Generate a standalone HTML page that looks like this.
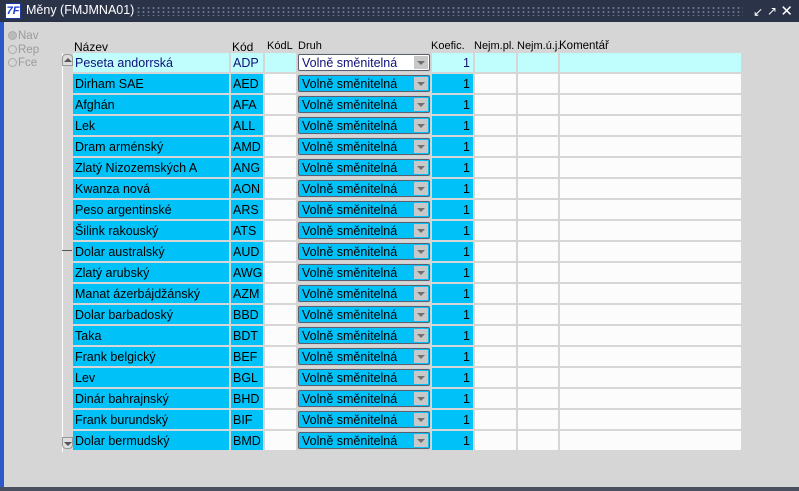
<!DOCTYPE html>
<html><head><meta charset="utf-8"><style>
*{margin:0;padding:0;box-sizing:border-box}
body{width:799px;height:491px;overflow:hidden;background:#d6d6d6;font-family:"Liberation Sans",sans-serif;font-size:12px;position:relative}
.title{position:absolute;left:0;top:0;width:799px;height:22px;background:#2b3349;color:#fff;font-size:12.5px}
.title .ic{position:absolute;left:5px;top:3px;width:16px;height:16px;background:#fff;border:1px solid #1a3aa0;color:#1a3ad0;font-weight:bold;font-style:italic;font-size:11px;line-height:14px;text-align:center}
.title .t{position:absolute;left:26px;top:3px}
.title .dots{position:absolute;left:136px;right:56px;top:6px;height:10px;background-image:radial-gradient(#6a7590 1px,transparent 1.3px);background-size:5px 4px}
.lb{position:absolute;left:0;top:22px;width:4px;height:469px;background:#2a5ac8}
.bb{position:absolute;left:0;top:487px;width:799px;height:4px;background:#4a5060}
.radio{position:absolute;left:8px;color:#9a9a9a;font-size:11.5px}
.radio i{display:inline-block;width:9px;height:9px;border-radius:50%;border:1px solid #aaa;margin-right:1px;vertical-align:-1px}
.hdr{position:absolute;top:40px;font-size:11px;color:#000}
.row{position:absolute;left:73px;height:19px;display:flex;font-size:12.5px}
.row>div{height:19px;line-height:20px;padding-left:2px;margin-right:2px;background:#00c2f8;color:#000;white-space:nowrap;overflow:hidden}
.row>.w{background:#fcfcfc}
.row>.d{background:#d0d0d0;margin-right:1px;padding:1px 0 0 1px;line-height:15px}
.sel{width:132px;height:17px;border:1px solid #5a6070;border-radius:2px;background:#00c2f8;position:relative;line-height:16px;padding-left:3px;font-size:12.5px}
.sel span{position:absolute;right:1px;top:1px;width:14px;height:13px;background:#c8c8c8}
.sel span:after{content:"";position:absolute;left:3px;top:5px;border:4px solid transparent;border-top:4px solid #707070;border-bottom:0}
.row>.n{text-align:right;padding-right:3px}
.r0>div{background:#c0fefe;color:#10107a}
.r0>.d{background:#d0d0d0}
.r0 .sel{background:#fff;color:#10107a}
.sb{position:absolute;left:62px;top:53px;width:10px;height:399px;border-left:1px solid #fff}
</style></head><body>
<div class="title"><div class="ic">7F</div><div class="t">Měny (FMJMNA01)</div><div class="dots"></div>
<div style="position:absolute;right:36px;top:5px;color:#fff;font-size:12px">↙</div>
<div style="position:absolute;right:22px;top:4px;color:#fff;font-size:12px">↗</div>
<div style="position:absolute;right:6px;top:2px;color:#fff;font-size:15px">✕</div></div>
<div class="lb"></div><div class="bb"></div>
<div class="radio" style="top:30px"><i style="background:#bbb"></i>Nav</div>
<div class="radio" style="top:44px"><i></i>Rep</div>
<div class="radio" style="top:57px"><i></i>Fce</div>
<div class="hdr" style="left:74px;font-size:12px">Název</div>
<div class="hdr" style="left:232px;font-size:12px">Kód</div>
<div class="hdr" style="left:267px">KódL</div>
<div class="hdr" style="left:298px">Druh</div>
<div class="hdr" style="left:431px">Koefic.</div>
<div class="hdr" style="left:474px">Nejm.pl.</div>
<div class="hdr" style="left:517px">Nejm.ú.j.</div>
<div class="hdr" style="left:559px;font-size:11.5px">Komentář</div>
<div class="sb"></div>
<div style="position:absolute;left:62px;top:54px;width:11px;height:12px;border:1px solid #999;border-radius:4px 4px 0 0;background:#ddd"><div style="position:absolute;left:1px;top:3px;border:4px solid transparent;border-bottom:4px solid #555;border-top:0"></div></div>
<div style="position:absolute;left:62px;top:437px;width:11px;height:12px;border:1px solid #999;border-radius:0 0 4px 4px;background:#ddd"><div style="position:absolute;left:1px;top:4px;border:4px solid transparent;border-top:4px solid #555;border-bottom:0"></div></div>
<div style="position:absolute;left:62px;top:250px;width:10px;height:1px;background:#555"></div>

<div class="row r0" style="top:53px"><div style="width:156px">Peseta andorrská</div><div style="width:32px">ADP</div><div style="width:31px;margin-right:1px"></div><div class="d" style="width:134px"><div class="sel">Volně směnitelná<span></span></div></div><div class="n" style="width:41px">1</div><div style="width:41px"></div><div style="width:40px"></div><div style="width:181px"></div></div>
<div class="row" style="top:74px"><div style="width:156px">Dirham SAE</div><div style="width:32px">AED</div><div class="w" style="width:31px;margin-right:1px"></div><div class="d" style="width:134px"><div class="sel">Volně směnitelná<span></span></div></div><div class="n" style="width:41px">1</div><div class="w" style="width:41px"></div><div class="w" style="width:40px"></div><div class="w" style="width:181px"></div></div>
<div class="row" style="top:95px"><div style="width:156px">Afghán</div><div style="width:32px">AFA</div><div class="w" style="width:31px;margin-right:1px"></div><div class="d" style="width:134px"><div class="sel">Volně směnitelná<span></span></div></div><div class="n" style="width:41px">1</div><div class="w" style="width:41px"></div><div class="w" style="width:40px"></div><div class="w" style="width:181px"></div></div>
<div class="row" style="top:116px"><div style="width:156px">Lek</div><div style="width:32px">ALL</div><div class="w" style="width:31px;margin-right:1px"></div><div class="d" style="width:134px"><div class="sel">Volně směnitelná<span></span></div></div><div class="n" style="width:41px">1</div><div class="w" style="width:41px"></div><div class="w" style="width:40px"></div><div class="w" style="width:181px"></div></div>
<div class="row" style="top:137px"><div style="width:156px">Dram arménský</div><div style="width:32px">AMD</div><div class="w" style="width:31px;margin-right:1px"></div><div class="d" style="width:134px"><div class="sel">Volně směnitelná<span></span></div></div><div class="n" style="width:41px">1</div><div class="w" style="width:41px"></div><div class="w" style="width:40px"></div><div class="w" style="width:181px"></div></div>
<div class="row" style="top:158px"><div style="width:156px">Zlatý Nizozemských A</div><div style="width:32px">ANG</div><div class="w" style="width:31px;margin-right:1px"></div><div class="d" style="width:134px"><div class="sel">Volně směnitelná<span></span></div></div><div class="n" style="width:41px">1</div><div class="w" style="width:41px"></div><div class="w" style="width:40px"></div><div class="w" style="width:181px"></div></div>
<div class="row" style="top:179px"><div style="width:156px">Kwanza nová</div><div style="width:32px">AON</div><div class="w" style="width:31px;margin-right:1px"></div><div class="d" style="width:134px"><div class="sel">Volně směnitelná<span></span></div></div><div class="n" style="width:41px">1</div><div class="w" style="width:41px"></div><div class="w" style="width:40px"></div><div class="w" style="width:181px"></div></div>
<div class="row" style="top:200px"><div style="width:156px">Peso argentinské</div><div style="width:32px">ARS</div><div class="w" style="width:31px;margin-right:1px"></div><div class="d" style="width:134px"><div class="sel">Volně směnitelná<span></span></div></div><div class="n" style="width:41px">1</div><div class="w" style="width:41px"></div><div class="w" style="width:40px"></div><div class="w" style="width:181px"></div></div>
<div class="row" style="top:221px"><div style="width:156px">Šilink rakouský</div><div style="width:32px">ATS</div><div class="w" style="width:31px;margin-right:1px"></div><div class="d" style="width:134px"><div class="sel">Volně směnitelná<span></span></div></div><div class="n" style="width:41px">1</div><div class="w" style="width:41px"></div><div class="w" style="width:40px"></div><div class="w" style="width:181px"></div></div>
<div class="row" style="top:242px"><div style="width:156px">Dolar australský</div><div style="width:32px">AUD</div><div class="w" style="width:31px;margin-right:1px"></div><div class="d" style="width:134px"><div class="sel">Volně směnitelná<span></span></div></div><div class="n" style="width:41px">1</div><div class="w" style="width:41px"></div><div class="w" style="width:40px"></div><div class="w" style="width:181px"></div></div>
<div class="row" style="top:263px"><div style="width:156px">Zlatý arubský</div><div style="width:32px">AWG</div><div class="w" style="width:31px;margin-right:1px"></div><div class="d" style="width:134px"><div class="sel">Volně směnitelná<span></span></div></div><div class="n" style="width:41px">1</div><div class="w" style="width:41px"></div><div class="w" style="width:40px"></div><div class="w" style="width:181px"></div></div>
<div class="row" style="top:284px"><div style="width:156px">Manat ázerbájdžánský</div><div style="width:32px">AZM</div><div class="w" style="width:31px;margin-right:1px"></div><div class="d" style="width:134px"><div class="sel">Volně směnitelná<span></span></div></div><div class="n" style="width:41px">1</div><div class="w" style="width:41px"></div><div class="w" style="width:40px"></div><div class="w" style="width:181px"></div></div>
<div class="row" style="top:305px"><div style="width:156px">Dolar barbadoský</div><div style="width:32px">BBD</div><div class="w" style="width:31px;margin-right:1px"></div><div class="d" style="width:134px"><div class="sel">Volně směnitelná<span></span></div></div><div class="n" style="width:41px">1</div><div class="w" style="width:41px"></div><div class="w" style="width:40px"></div><div class="w" style="width:181px"></div></div>
<div class="row" style="top:326px"><div style="width:156px">Taka</div><div style="width:32px">BDT</div><div class="w" style="width:31px;margin-right:1px"></div><div class="d" style="width:134px"><div class="sel">Volně směnitelná<span></span></div></div><div class="n" style="width:41px">1</div><div class="w" style="width:41px"></div><div class="w" style="width:40px"></div><div class="w" style="width:181px"></div></div>
<div class="row" style="top:347px"><div style="width:156px">Frank belgický</div><div style="width:32px">BEF</div><div class="w" style="width:31px;margin-right:1px"></div><div class="d" style="width:134px"><div class="sel">Volně směnitelná<span></span></div></div><div class="n" style="width:41px">1</div><div class="w" style="width:41px"></div><div class="w" style="width:40px"></div><div class="w" style="width:181px"></div></div>
<div class="row" style="top:368px"><div style="width:156px">Lev</div><div style="width:32px">BGL</div><div class="w" style="width:31px;margin-right:1px"></div><div class="d" style="width:134px"><div class="sel">Volně směnitelná<span></span></div></div><div class="n" style="width:41px">1</div><div class="w" style="width:41px"></div><div class="w" style="width:40px"></div><div class="w" style="width:181px"></div></div>
<div class="row" style="top:389px"><div style="width:156px">Dinár bahrajnský</div><div style="width:32px">BHD</div><div class="w" style="width:31px;margin-right:1px"></div><div class="d" style="width:134px"><div class="sel">Volně směnitelná<span></span></div></div><div class="n" style="width:41px">1</div><div class="w" style="width:41px"></div><div class="w" style="width:40px"></div><div class="w" style="width:181px"></div></div>
<div class="row" style="top:410px"><div style="width:156px">Frank burundský</div><div style="width:32px">BIF</div><div class="w" style="width:31px;margin-right:1px"></div><div class="d" style="width:134px"><div class="sel">Volně směnitelná<span></span></div></div><div class="n" style="width:41px">1</div><div class="w" style="width:41px"></div><div class="w" style="width:40px"></div><div class="w" style="width:181px"></div></div>
<div class="row" style="top:431px"><div style="width:156px">Dolar bermudský</div><div style="width:32px">BMD</div><div class="w" style="width:31px;margin-right:1px"></div><div class="d" style="width:134px"><div class="sel">Volně směnitelná<span></span></div></div><div class="n" style="width:41px">1</div><div class="w" style="width:41px"></div><div class="w" style="width:40px"></div><div class="w" style="width:181px"></div></div>
</body></html>
